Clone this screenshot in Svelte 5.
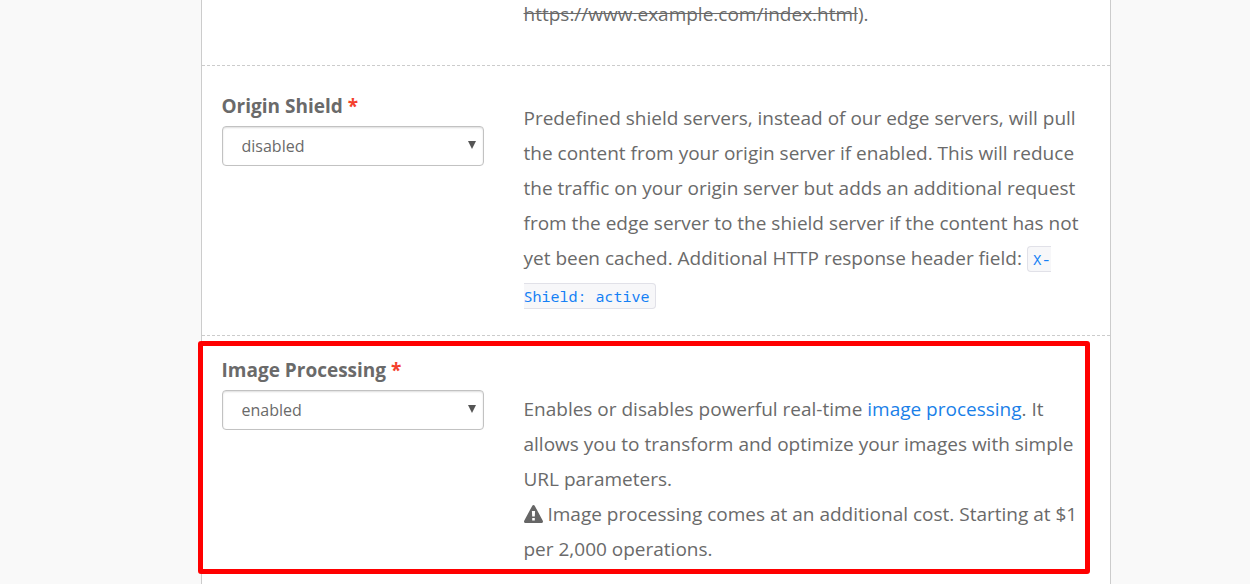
<script>
  let shield = $state('disabled');
  let processing = $state('enabled');
</script>

<div class="page">
  <main class="panel">
    <section class="row first">
      <p class="help"><s>https://www.example.com/index.html</s>).</p>
    </section>

    <section class="row shield">
      <div class="field">
        <label for="shield">Origin Shield <span class="req">*</span></label>
        <div class="select">
          <select id="shield" bind:value={shield}>
            <option>disabled</option>
            <option>enabled</option>
          </select>
          <svg viewBox="0 0 8 8" aria-hidden="true"><path d="M0 0h8L4 8z" /></svg>
        </div>
      </div>
      <p class="help">
        Predefined shield servers, instead of our edge servers, will pull the content from your
        origin server if enabled. This will reduce the traffic on your origin server but adds an
        additional request from the edge server to the shield server if the content has not yet been
        cached. Additional HTTP response header field: <code>X-<wbr />Shield: active</code>
      </p>
    </section>

    <section class="row image">
      <div class="field">
        <label for="processing">Image Processing <span class="req">*</span></label>
        <div class="select">
          <select id="processing" bind:value={processing}>
            <option>enabled</option>
            <option>disabled</option>
          </select>
          <svg viewBox="0 0 8 8" aria-hidden="true"><path d="M0 0h8L4 8z" /></svg>
        </div>
      </div>
      <div class="help">
        <p>
          Enables or disables powerful real-time <a href="#processing">image processing</a>. It
          allows you to transform and optimize your images with simple URL parameters.
        </p>
        <p>
          <svg class="warn" viewBox="0 0 19 18" aria-hidden="true">
            <path
              fill-rule="evenodd"
              d="M9.500 0c.5 0 .9.300 1.200.700l8.100 15c.5 1-.1 2.300-1.200 2.300H1.400C.3 18-.3 16.700.2 15.700l8.100-15C8.600.3 9 0 9.500 0zM7.900 6l.3 5.500h2.600l.3-5.500zM8.200 13v2.500h2.600V13z"
            />
          </svg>
          Image processing comes at an additional cost. Starting at $1 per 2,000 operations.
        </p>
      </div>
      <div class="highlight"></div>
    </section>
  </main>
</div>

<style>
  :global(body) {
    background: #f9f9f9;
  }
  .page {
    padding-left: 61px;
  }
  .panel {
    box-sizing: border-box;
    max-width: 910px;
    min-height: 100vh;
    margin: 0 auto;
    background: #fff;
    border: solid #ccc;
    border-width: 0 1px;
    color: #6a6a6a;
    font: 19px/35px "Open Sans", sans-serif;
  }
  .row {
    position: relative;
    display: grid;
    grid-template-columns: 262px 1fr;
    column-gap: 40px;
    padding: 0 28px 0 20px;
    border-bottom: 1px dashed #ccc;
  }
  .first {
    padding-bottom: 33px;
  }
  .shield {
    padding-top: 23px;
    padding-bottom: 20px;
  }
  .image {
    padding-top: 17px;
    padding-bottom: 7px;
    border-bottom: 0;
  }
  .help {
    grid-column: 2;
    margin: 0;
  }
  .help p {
    margin: 0;
  }
  .first .help {
    margin-top: -3px;
  }
  .shield .help {
    padding-top: 12px;
  }
  .image .help {
    padding-top: 39px;
  }
  label {
    display: block;
    font-weight: 700;
  }
  .req {
    color: #f4402c;
  }
  .select {
    position: relative;
    margin-top: 2px;
  }
  select {
    appearance: none;
    display: block;
    width: 100%;
    height: 40px;
    padding: 0 19px;
    border: 1px solid #c2c2c2;
    border-radius: 4px;
    background: #fff;
    box-shadow: inset 0 1px 2px #ddd;
    color: #6a6a6a;
    font: 16px "Open Sans", sans-serif;
  }
  .select svg {
    position: absolute;
    right: 8px;
    top: 15px;
    width: 8px;
    height: 8px;
    fill: #555;
    pointer-events: none;
  }
  a {
    color: #1a7fe8;
    text-decoration: none;
  }
  code {
    padding: 2px 5px;
    border: 1px solid #e1e1e8;
    border-radius: 4px;
    background: #f7f7f9;
    color: #1480f5;
    font: 15px/37px "Noto Sans Mono", "DejaVu Sans Mono", monospace;
  }
  .warn {
    width: 19px;
    height: 18px;
    fill: #666;
    vertical-align: -2px;
  }
  .highlight {
    position: absolute;
    inset: 5px 20px 0 -4px;
    border: 5px solid #f00;
    border-radius: 3px;
    pointer-events: none;
  }
</style>
